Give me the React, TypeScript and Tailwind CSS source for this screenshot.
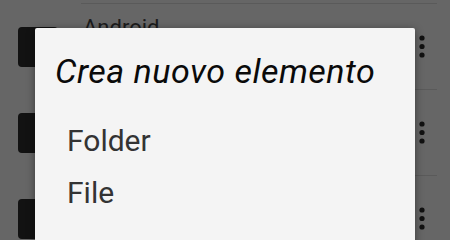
import React from "react";

function Kebab() {
  return (
    <svg width="8" height="26" viewBox="0 0 8 26" className="shrink-0">
      <circle cx="4" cy="4" r="2.6" fill="#111" />
      <circle cx="4" cy="12.5" r="2.6" fill="#111" />
      <circle cx="4" cy="21" r="2.6" fill="#111" />
    </svg>
  );
}

function Row({ title }: { title: string }) {
  return (
    <div className="flex h-[85px] items-center">
      <div className="ml-[18px] h-10 w-10 shrink-0 rounded-[4px] bg-[#121212]" />
      <div className="ml-[25px] flex-1 self-start pt-[13px] text-[22px] leading-[22px] text-[#1c1c1c]">
        {title}
      </div>
      <div className="mr-[24px]">
        <Kebab />
      </div>
    </div>
  );
}

function Line() {
  return <div className="ml-[81px] mr-[13px] h-px bg-[#5a5a5a]" />;
}

export default function App() {
  return (
    <div
      className="relative h-[240px] w-[450px] overflow-hidden bg-[#666666]"
      style={{ fontFamily: "Roboto, 'Noto Sans', sans-serif" }}
    >
      <div className="h-[3px]" />
      <Line />
      <Row title="Android" />
      <Line />
      <Row title="" />
      <Line />
      <Row title="" />

      <div className="absolute left-[35px] top-[28px] h-[240px] w-[380px] rounded-[2px] bg-[#f4f4f4] shadow-[0_2px_8px_rgba(0,0,0,0.45)]">
        <div className="pl-[20px] pt-[26px] text-[34px] italic leading-[34px] tracking-[0.5px] text-[#0a0a0a]">
          Crea nuovo elemento
        </div>
        <div className="mt-[38px] pl-[32px] text-[30px] leading-[30px] text-[#333333]">
          Folder
        </div>
        <div className="mt-[22px] pl-[32px] text-[30px] leading-[30px] text-[#333333]">
          File
        </div>
      </div>
    </div>
  );
}
